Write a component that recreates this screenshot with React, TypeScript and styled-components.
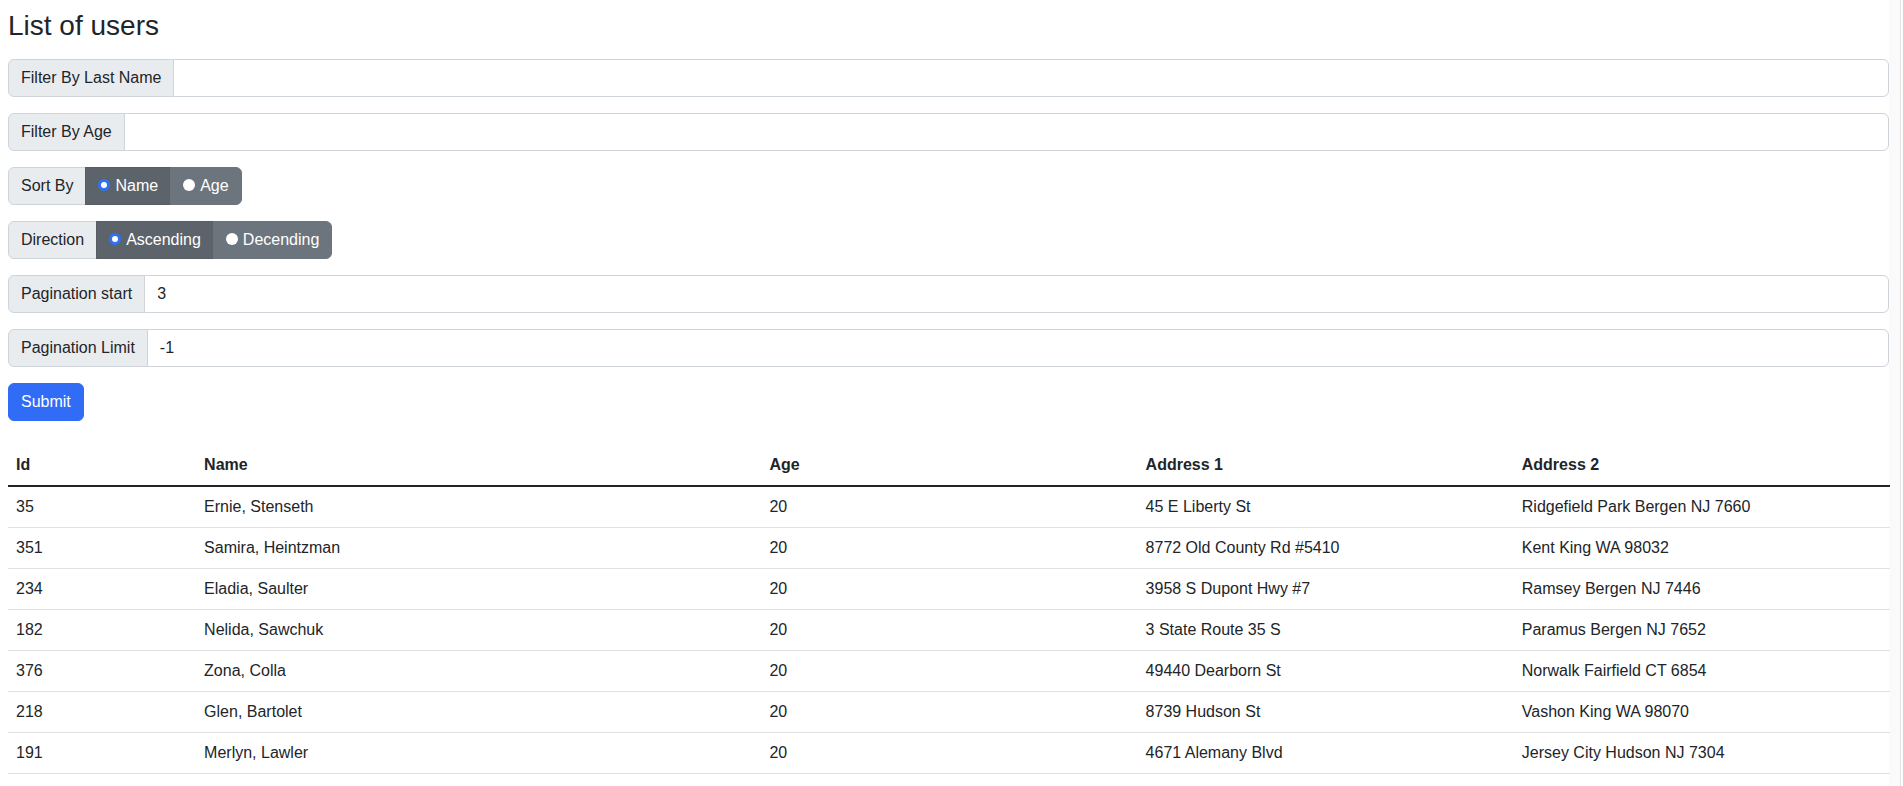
import React from "react";
import styled, { createGlobalStyle } from "styled-components";

const GlobalStyle = createGlobalStyle`
  html { overflow-y: scroll; }
  html::-webkit-scrollbar { width: 15px; }
  html::-webkit-scrollbar-track {
    background: linear-gradient(to right, #fafafa 0, #fafafa 11px, #e4e4e4 11px, #e4e4e4 12px, #fdfdfd 12px);
  }
  html::-webkit-scrollbar-thumb { background: transparent; }
  body {
    margin: 0;
    font-family: "Liberation Sans", Arial, sans-serif;
    font-size: 16px;
    line-height: 1.5;
    color: #212529;
    background: #fff linear-gradient(to left, #fdfdfd 0, #fdfdfd 2px, #e4e4e4 2px, #e4e4e4 3px, #fafafa 3px, #fafafa 14px, transparent 14px) no-repeat right top / 14px 100%;
    min-height: 100vh;
  }
  * { box-sizing: border-box; }
`;

const Page = styled.div`
  padding: 8px 14px 40px 8px;
`;

const Title = styled.h3`
  margin: 0 0 15px;
  font-size: 28px;
  font-weight: 500;
  line-height: 36px;
`;

const Form = styled.form`
  display: flex;
  flex-direction: column;
  align-items: flex-start;
`;

const Group = styled.div<{ $full?: boolean }>`
  display: flex;
  align-items: stretch;
  height: 38px;
  margin-bottom: 16px;
  width: ${(p) => (p.$full ? "100%" : "auto")};
`;

const Addon = styled.span`
  display: flex;
  align-items: center;
  padding: 6px 12px;
  background: #e9ecef;
  border: 1px solid #ced4da;
  border-radius: 6px 0 0 6px;
  white-space: nowrap;
  color: #212529;
`;

const Field = styled.input`
  flex: 1;
  min-width: 0;
  margin-left: -1px;
  padding: 6px 12px;
  border: 1px solid #ced4da;
  border-radius: 0 6px 6px 0;
  font: inherit;
  color: #212529;
  background: #fff;
  outline: none;
`;

const Choice = styled.label<{ $active?: boolean; $last?: boolean }>`
  display: flex;
  align-items: center;
  margin-left: -1px;
  padding: 6px 12px;
  color: #fff;
  background: ${(p) => (p.$active ? "#5c636a" : "#6c757d")};
  border: 1px solid ${(p) => (p.$active ? "#565e64" : "#6c757d")};
  border-radius: ${(p) => (p.$last ? "0 6px 6px 0" : "0")};
  cursor: pointer;
  white-space: nowrap;
`;

const Dot = styled.span<{ $checked?: boolean }>`
  display: inline-block;
  flex: none;
  width: 12px;
  height: 12px;
  margin-right: 5px;
  border-radius: 50%;
  background: #fff;
  border: ${(p) => (p.$checked ? "3px solid #2f72f6" : "none")};
  transform: translateY(-1px);
`;

const Submit = styled.button`
  padding: 6px 12px;
  height: 38px;
  font: inherit;
  color: #fff;
  background: #306cf6;
  border: 1px solid #306cf6;
  border-radius: 6px;
  cursor: pointer;
`;

const Table = styled.table`
  width: calc(100% + 1px);
  margin-top: 24px;
  border-collapse: collapse;
  table-layout: fixed;
`;

const Th = styled.th`
  padding: 8px;
  text-align: left;
  font-weight: 700;
  border-bottom: 2px solid #212529;
`;

const Td = styled.td`
  padding: 8px;
  border-bottom: 1px solid #dee2e6;
`;

const users = [
  ["35", "Ernie, Stenseth", "20", "45 E Liberty St", "Ridgefield Park Bergen NJ 7660"],
  ["351", "Samira, Heintzman", "20", "8772 Old County Rd #5410", "Kent King WA 98032"],
  ["234", "Eladia, Saulter", "20", "3958 S Dupont Hwy #7", "Ramsey Bergen NJ 7446"],
  ["182", "Nelida, Sawchuk", "20", "3 State Route 35 S", "Paramus Bergen NJ 7652"],
  ["376", "Zona, Colla", "20", "49440 Dearborn St", "Norwalk Fairfield CT 6854"],
  ["218", "Glen, Bartolet", "20", "8739 Hudson St", "Vashon King WA 98070"],
  ["191", "Merlyn, Lawler", "20", "4671 Alemany Blvd", "Jersey City Hudson NJ 7304"],
];

export default function App() {
  return (
    <Page>
      <GlobalStyle />
      <Title>List of users</Title>
      <Form onSubmit={(e) => e.preventDefault()}>
        <Group $full>
          <Addon>Filter By Last Name</Addon>
          <Field defaultValue="" />
        </Group>
        <Group $full>
          <Addon>Filter By Age</Addon>
          <Field defaultValue="" />
        </Group>
        <Group>
          <Addon>Sort By</Addon>
          <Choice $active>
            <Dot $checked />
            Name
          </Choice>
          <Choice $last>
            <Dot />
            Age
          </Choice>
        </Group>
        <Group>
          <Addon>Direction</Addon>
          <Choice $active>
            <Dot $checked />
            Ascending
          </Choice>
          <Choice $last>
            <Dot />
            Decending
          </Choice>
        </Group>
        <Group $full>
          <Addon>Pagination start</Addon>
          <Field defaultValue="3" />
        </Group>
        <Group $full>
          <Addon>Pagination Limit</Addon>
          <Field defaultValue="-1" />
        </Group>
        <Submit type="submit">Submit</Submit>
      </Form>
      <Table>
        <colgroup>
          <col style={{ width: 188 }} />
          <col style={{ width: 565 }} />
          <col style={{ width: 376 }} />
          <col style={{ width: 376 }} />
          <col style={{ width: 376 }} />
        </colgroup>
        <thead>
          <tr>
            <Th>Id</Th>
            <Th>Name</Th>
            <Th>Age</Th>
            <Th>Address 1</Th>
            <Th>Address 2</Th>
          </tr>
        </thead>
        <tbody>
          {users.map((u) => (
            <tr key={u[0]}>
              {u.map((c, i) => (
                <Td key={i}>{c}</Td>
              ))}
            </tr>
          ))}
        </tbody>
      </Table>
    </Page>
  );
}
